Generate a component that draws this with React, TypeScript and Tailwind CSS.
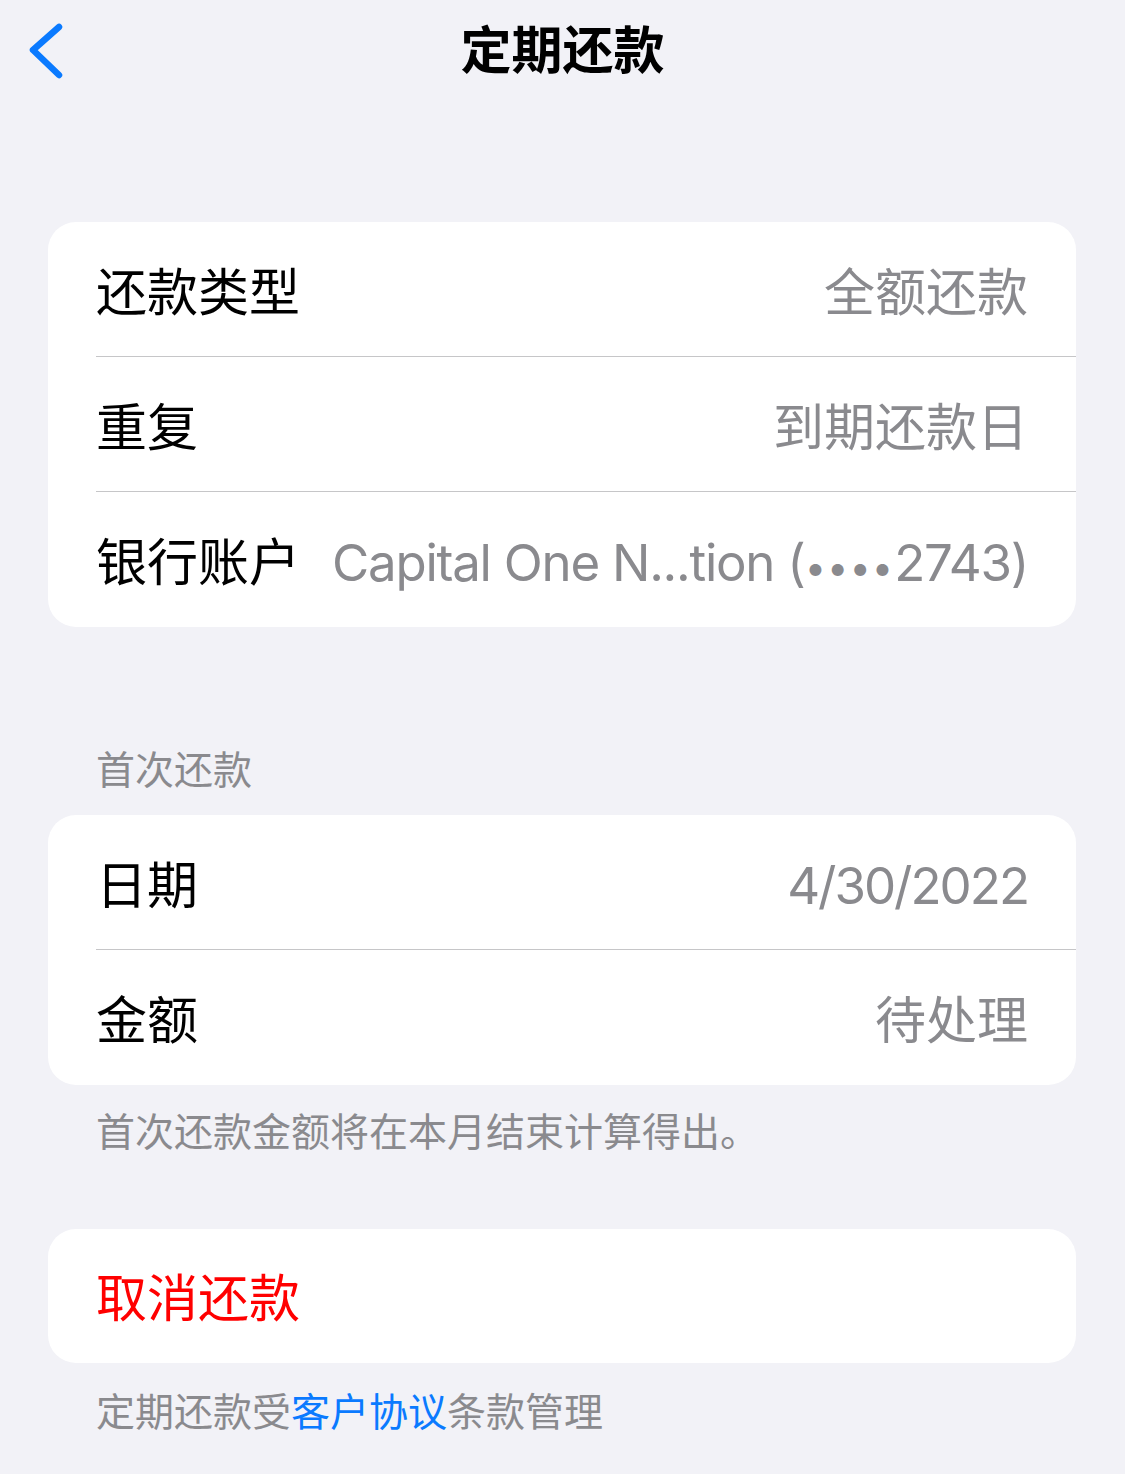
const font = "font-['Inter','Noto_Sans_CJK_SC',sans-serif]"

function Row({ label, value, last }: { label: string; value: React.ReactNode; last?: boolean }) {
  return (
    <div className="relative flex h-[135px] items-center justify-between gap-[30px] pl-[48px] pr-[48px] pt-[5px]">
      <span className="text-[51px] leading-none text-black whitespace-nowrap">{label}</span>
      <span className="text-[51px] leading-none text-[#8a8a8e] whitespace-nowrap">{value}</span>
      {!last && <div className="absolute bottom-0 left-[48px] right-0 h-px bg-[#c6c6c8]" />}
    </div>
  )
}

export default function App() {
  return (
    <div className={`min-h-[1474px] w-[1125px] bg-[#f2f2f7] ${font}`}>
      {/* Nav bar */}
      <div className="relative flex h-[100px] items-center justify-center">
        <button className="absolute left-[26px] top-[22px]">
          <svg width="40" height="60" viewBox="0 0 40 60" fill="none">
            <path d="M33 5 L7 28 L33 53" stroke="#0a7aff" strokeWidth="6.5" strokeLinecap="round" strokeLinejoin="round" />
          </svg>
        </button>
        <h1 className="text-[51px] font-bold leading-none text-black">定期还款</h1>
      </div>

      <div className="flex flex-col px-[48px] pr-[49px]">
        <div className="mt-[122px] overflow-hidden rounded-[28px] bg-white">
          <Row label="还款类型" value="全额还款" />
          <Row label="重复" value="到期还款日" />
          <Row
            label="银行账户"
            value={
              <span className="tracking-[-1.25px]">
                Capital One N...tion (<span className="text-[38px] tracking-[1px]">••••</span>2743)
              </span>
            }
            last
          />
        </div>

        <div className="mt-[123px] h-[40px] pl-[48px] text-[39px] leading-[40px] text-[#8a8a8e]">首次还款</div>

        <div className="mt-[25px] overflow-hidden rounded-[28px] bg-white">
          <Row label="日期" value={<span className="tracking-[-2px]">4/30/2022</span>} />
          <Row label="金额" value="待处理" last />
        </div>

        <p className="mt-[27px] h-[40px] pl-[48px] text-[39px] leading-[40px] text-[#8a8a8e]">首次还款金额将在本月结束计算得出。</p>

        <div className="mt-[77px] flex h-[134px] items-center rounded-[28px] bg-white pl-[48px] pt-[5px]">
          <span className="text-[51px] leading-none text-[#ff0000]">取消还款</span>
        </div>

        <p className="mt-[29px] h-[40px] pl-[48px] text-[39px] leading-[40px] text-[#8a8a8e]">
          定期还款受<span className="text-[#0a7aff]">客户协议</span>条款管理
        </p>
      </div>
    </div>
  )
}
